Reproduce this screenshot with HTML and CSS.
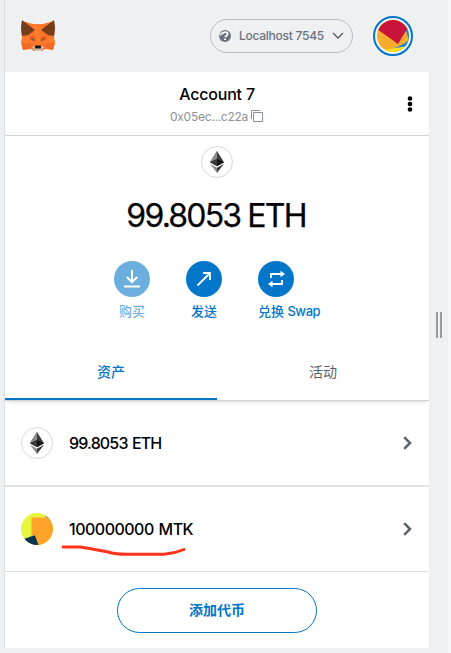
FILE: index.html
```html
<!DOCTYPE html>
<html lang="zh-CN">
<head>
<meta charset="utf-8">
<title>MetaMask</title>
<link rel="stylesheet" href="styles.css">
</head>
<body>
<svg class="defs" width="0" height="0"><defs>
<symbol id="eth" viewBox="0 0 14 22"><path fill="#343434" d="M7 0v15L0 11.2z"/><path fill="#8c8c8c" d="M7 0L0 11.2 7 8z"/><path fill="#3c3c3b" d="M7 0l7 11.2L7 15z"/><path fill="#141414" d="M7 8l7 3.2L7 15.3z"/><path fill="#393939" d="M0 11.2L7 8v7.3z"/><path fill="#8c8c8c" d="M0 12.8l7 4V22z"/><path fill="#3c3c3b" d="M14 12.8l-7 4V22z"/></symbol>
</defs></svg>
<div class="window">
<main class="app">
  <header class="topbar">
    <svg class="fox" viewBox="0 0 34 32">
      <path fill="#f6752b" d="M1 1l11 3h10l11-3 1 7-1 9 1 6-2 7-8-1-3 2h-8l-3-2-8 1-2-7 1-6L0 8z"/>
      <path fill="#ff7a2b" d="M12 4h10l-2 21h-6zM1 16l12 3-2 9-10-5zm32 0l-12 3 2 9 10-5z"/>
      <path fill="#763d1c" d="M1 0l13 10-7 5-6 1L0 8zm32 0L20 10l7 5 6 1 1-8z"/>
      <path fill="#f06a26" d="M1 23h9l1 4-9 3zm32 0h-9l-1 4 9 3z"/>
      <path fill="#e2591f" d="M9 17l4-1 2 5-6-1zm16 0l-4-1-2 5 6-1z"/>
      <path fill="#6a5f60" d="M11 18.700l3 1-1 1.300-2-1zm12 0l-3 1 1 1.300 2-1z"/>
      <path fill="#d5bfb2" d="M11 27l4-1h4l4 1-3 4h-6z"/><path fill="#161616" d="M14.300 25.500h5.400l.5 3h-6.400z"/>
    </svg>
    <div class="network">
      <svg width="12" height="12" viewBox="0 0 12 12"><circle cx="6" cy="6" r="6" fill="#6a737d"/><path d="M3.5 4C4 1.6 8.5 1.4 8.6 4c0 1.8-2.3 1.6-2.3 3.3M6 8.4v1.7" fill="none" stroke="#fff" stroke-width="1.8"/><path d="M0 3l4-1-1 3-2 1z" fill="#fff" opacity=".7"/></svg>
      <span class="network-name">Localhost 7545</span>
      <svg width="12" height="8" viewBox="0 0 12 8"><path d="M1 1l5 5 5-5" fill="none" stroke="#535a61" stroke-width="1.3"/></svg>
    </div>
    <svg class="avatar" viewBox="0 0 40 40"><defs><clipPath id="a"><circle cx="20" cy="20" r="16"/></clipPath></defs><circle cx="20" cy="20" r="19" fill="#f2f3f4" stroke="#0376c9" stroke-width="2"/><g clip-path="url(#a)"><path fill="#f5ac2d" d="M0 0h40v40H0z"/><path fill="#1c83dc" d="M30 12h10v20L21 32l11-5z"/><path fill="#f5ac2d" d="M31 17l2-2 3 9-4 3-10 5z"/><path fill="#f8df24" d="M10 34l25-4-3 10H10z"/><path fill="#c8143b" d="M0 10L12 0h28L34 13 25 28z"/></g></svg>
  </header>
  <section class="account">
    <div class="account-info">
      <div class="account-name"><span>Account 7</span></div>
      <div class="address"><span>0x05ec...c22a</span><svg width="12" height="12" viewBox="0 0 12 12"><path d="M2.5 2.5h9v9h-9zM.5 9V.5H9" fill="none" stroke="#8b9197"/></svg></div>
    </div>
    <svg class="menu" width="6" height="16" viewBox="0 0 6 16"><circle cx="3" cy="2.5" r="2.3"/><circle cx="3" cy="8" r="2.3"/><circle cx="3" cy="13.5" r="2.3"/></svg>
  </section>
  <section class="overview">
    <div class="token-icon"><svg width="14" height="22"><use href="#eth"/></svg></div>
    <div class="balance"><span>99.8053</span><span class="unit">ETH</span></div>
    <div class="actions">
      <div class="action disabled"><div class="disc"><svg width="18" height="20" viewBox="0 0 18 20"><path d="M9 1v12M3.8 8L9 13.2 14.2 8M1 17.500h16" fill="none" stroke="#fff" stroke-width="2"/></svg></div><span>购买</span></div>
      <div class="action"><div class="disc"><svg width="16" height="16" viewBox="0 0 16 16"><path d="M1.5 14.5L14 2M7 2h7v7" fill="none" stroke="#fff" stroke-width="1.8"/></svg></div><span>发送</span></div>
      <div class="action swap"><div class="disc"><svg width="17" height="18" viewBox="0 0 17 18"><path d="M3 8V4h10M14 10v4H4" fill="none" stroke="#fff" stroke-width="1.8"/><path fill="#fff" d="M12.5.7L17 4l-4.500 3.300zM4.500 10.700L0 14l4.500 3.300z"/></svg></div><span>兑换 <b>Swap</b></span></div>
    </div>
  </section>
  <nav class="tabs"><div class="tab active">资产</div><div class="tab">活动</div></nav>
  <div class="asset"><div class="token-icon"><svg width="14" height="22"><use href="#eth"/></svg></div><span class="amount">99.8053 ETH</span><svg class="chevron" width="9" height="14" viewBox="0 0 9 14"><path d="M1.200 1.200L7 7l-5.800 5.800" fill="none" stroke="#5b646d" stroke-width="2.500"/></svg></div>
  <div class="asset second">
    <svg class="token-art" width="32" height="32" viewBox="0 0 32 32"><defs><clipPath id="m"><circle cx="16" cy="16" r="16"/></clipPath></defs><g clip-path="url(#m)"><path fill="#e8f53c" d="M0 0h32v32H0z"/><path fill="#4c68b0" d="M24 3l4 0 4 7z"/><path fill="#06334f" d="M3 26l11-4 4 10H3z"/><path fill="#ffa32b" d="M10.500 4.500H27L32 9v23H17.500L14 22l-3.500 1z"/></g></svg>
    <span class="amount token">100000000 MTK</span><svg class="chevron" width="9" height="14" viewBox="0 0 9 14"><path d="M1.200 1.200L7 7l-5.800 5.800" fill="none" stroke="#5b646d" stroke-width="2.500"/></svg>
    <svg class="scribble" width="126" height="14" viewBox="0 0 126 14"><path d="M2 3h17c8 1 18 3 28 5 6 2 10 2.300 19 2.300h37c9-.8 14-2.300 20-4.800" fill="none" stroke="#ff321c" stroke-width="2.900" stroke-linecap="round"/></svg>
  </div>
  <footer><button class="add">添加代币</button></footer>
</main>
<aside class="handle"><i></i><i></i></aside>
</div>
</body>
</html>
```
FILE: styles.css
```css
* { box-sizing: border-box; }
body { margin: 0; height: 653px; overflow: hidden; background: #eff0f2; font-family: Inter, "Noto Sans CJK SC", sans-serif; color: #000; }
svg { display: block; flex: none; }
.defs { position: absolute; }
.window { display: flex; height: 653px; padding-left: 4px; border-right: 3px solid #f6f7f9; }
.app { width: 425px; height: 648px; border-left: 1px solid #dcdee0; background: #fff; }
.topbar { height: 72px; background: #eff0f2; display: flex; align-items: center; padding: 0 16px; }
.fox { width: 34px; height: 32px; }
.network { width: 143px; height: 34px; margin-left: 155px; border: 1px solid #babcc5; border-radius: 17px; display: flex; align-items: center; padding: 0 8px; }
.network-name { width: 86px; margin: 0 8px 0 8px; font-size: 12px; line-height: 16px; white-space: nowrap; color: #6a737d; font-weight: 500; letter-spacing: -.26px; }
.avatar { width: 40px; height: 40px; margin-left: 20px; }
.account { height: 64px; border-bottom: 1px solid #d2d4d6; display: flex; align-items: center; padding-right: 16px; }
.account-info { flex: 1; padding-left: 22px; text-align: center; }
.account-name { font-size: 16px; line-height: 24px; font-weight: 500; letter-spacing: -.2px; }
.address { display: flex; justify-content: center; align-items: center; gap: 3px; height: 20px; padding: 1px 1px 0 0; font-size: 12px; letter-spacing: -.26px; color: #8b9197; }
.menu { margin-top: 1px; }
.overview { height: 208px; padding-top: 10px; display: flex; flex-direction: column; align-items: center; }
.token-icon { width: 32px; height: 32px; flex: none; border: 1px solid #d6d9dc; border-radius: 50%; display: flex; align-items: center; justify-content: center; }
.balance { height: 46px; margin-top: 15px; padding-right: 2px; display: flex; gap: 7px; font-size: 32px; line-height: 46px; letter-spacing: -1.8px; -webkit-text-stroke: .25px #000; }
.actions { width: 206px; margin-top: 22px; display: flex; gap: 36px; }
.action { width: 36px; color: #0376c9; font-size: 13px; line-height: 20px; font-weight: 500; display: flex; flex-direction: column; align-items: center; white-space: nowrap; }
.action span { margin-top: 4px; }
.action b { font-weight: 500; letter-spacing: -.5px; }
.swap { align-items: flex-start; }
.disc { width: 36px; height: 36px; border-radius: 50%; background: #0376c9; display: flex; align-items: center; justify-content: center; }
.disabled { opacity: .58; }
.tabs { height: 57px; display: flex; border-bottom: 1px solid #d2d4d6; box-shadow: 0 3px 4px -2px #00000026; }
.tab { width: 212px; height: 56px; font-size: 14px; line-height: 55px; text-align: center; color: #5b646d; }
.active { border-bottom: 2px solid #0376c9; color: #0376c9; font-weight: 500; }
.asset { position: relative; height: 86px; padding: 0 17px 0 16px; border-bottom: 2px solid #e0e1e3; display: flex; align-items: center; }
.second { height: 85px; border-bottom-width: 1px; }
.amount { margin-left: 16px; font-size: 16px; line-height: 24px; font-weight: 500; letter-spacing: -.85px; word-spacing: 1px; }
.token { letter-spacing: -.5px; }
.chevron { margin-left: auto; }
.scribble { position: absolute; left: 56px; top: 57px; }
footer { padding-top: 16px; display: flex; justify-content: center; }
.add { width: 200px; height: 45px; padding: 0 0 3px; background: #fff; border: 1px solid #0376c9; border-radius: 23px; color: #0376c9; font: 700 14px/20px "Noto Sans CJK SC", sans-serif; }
.handle { width: 19px; display: flex; justify-content: center; gap: 2px; padding-top: 312px; }
.handle i { width: 2px; height: 26px; background: #999b9d; }
```
